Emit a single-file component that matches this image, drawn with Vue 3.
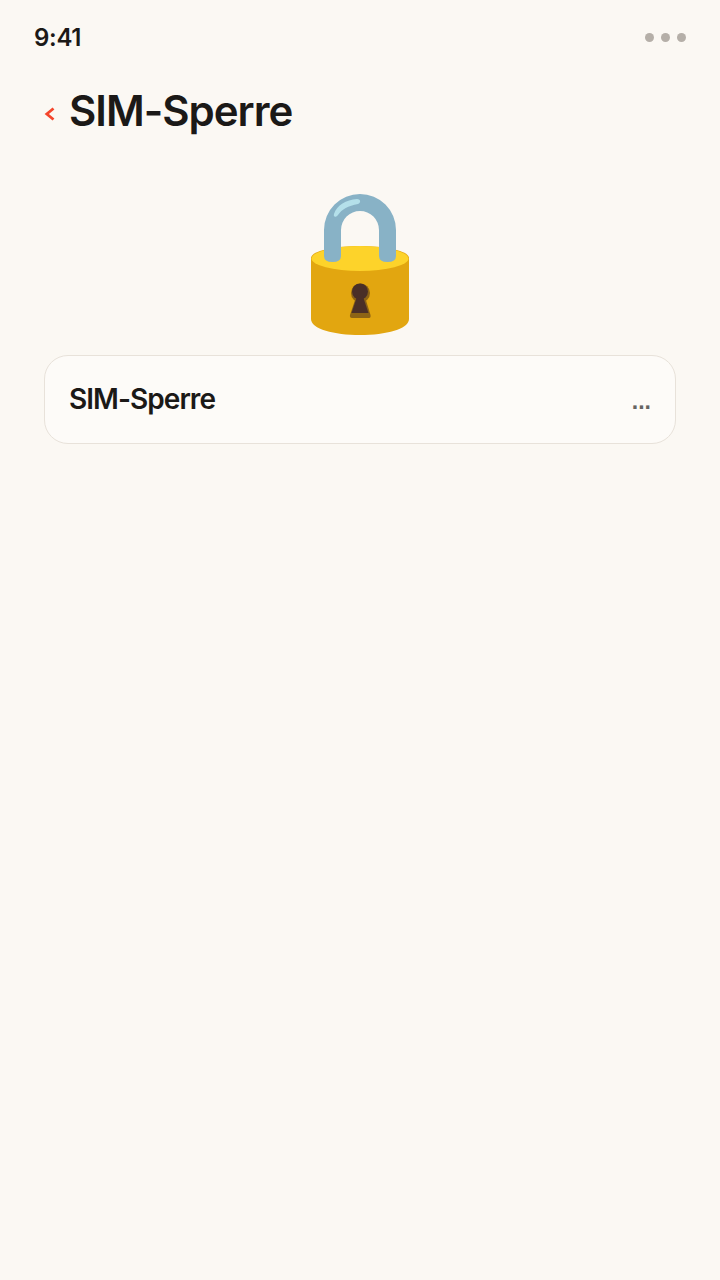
<script setup>
const title = 'SIM-Sperre'
</script>

<template>
  <main class="screen">
    <header class="status">
      <span class="time">9:41</span>
      <span class="dots"><i></i><i></i><i></i></span>
    </header>
    <div class="heading">
      <svg class="back" width="11" height="16" viewBox="0 0 11 16">
        <path d="M9.5 2.5 L2.8 8 L9.5 13.5" fill="none" stroke="#f4452b" stroke-width="2.8" />
      </svg>
      <h1>{{ title }}</h1>
    </div>
    <div class="hero">
      <svg width="100" height="143" viewBox="0 0 100 143">
        <path d="M1 65 C1 58 24 53 50 53 C76 53 99 58 99 65 V126 C99 136 76 142 50 142 C24 142 1 136 1 126 Z" fill="#e2a610" />
        <ellipse cx="50" cy="65.500" rx="48.500" ry="12.500" fill="#fdd32a" />
        <path d="M14 37 A36 36 0 0 1 86 37 V63 Q86 69 77.500 69 Q69 69 69 63 V37 A19 19 0 0 0 31 37 V63 Q31 69 22.500 69 Q14 69 14 63 Z" fill="#88b2c6" />
        <path d="M24 21 C27 12 36 7 47 6 C51 6 51 10 48 11 C38 13 32 16 28 22 C26 25 23 24 24 21 Z" fill="#b4e0ea" />
        <circle cx="50.500" cy="100" r="9.500" fill="#8d6415" />
        <path d="M46 104 L40 122 Q39.500 125 42 125 H59 Q61 125 60.500 122 L55 104 Z" fill="#8d6415" />
        <circle cx="50" cy="98.500" r="8" fill="#4a2f27" />
        <path d="M47.500 102 L41.500 120 H58.500 L52.500 102 Z" fill="#4a2f27" />
      </svg>
    </div>
    <section class="card">
      <span class="label">{{ title }}</span>
      <span class="more">...</span>
    </section>
  </main>
</template>

<style scoped>
.screen {
  width: 720px;
  height: 1280px;
  box-sizing: border-box;
  background: #fbf8f3;
  font-family: Inter, "Liberation Sans", sans-serif;
  color: #1b1917;
  overflow: hidden;
}
.status {
  height: 74px;
  box-sizing: border-box;
  padding: 0 34px;
  display: flex;
  align-items: center;
  justify-content: space-between;
}
.time {
  font-size: 24px;
  font-weight: 600;
  letter-spacing: -0.3px;
}
.dots {
  display: flex;
  gap: 7px;
}
.dots i {
  width: 9px;
  height: 9px;
  border-radius: 50%;
  background: #b5afa8;
}
.heading {
  height: 74px;
  padding-left: 44px;
  display: flex;
  align-items: center;
  gap: 14px;
}
.back {
  flex: none;
  margin-top: 6px;
}
h1 {
  margin: 0;
  font-size: 42px;
  line-height: 74px;
  font-weight: 600;
  letter-spacing: -1px;
}
.hero {
  height: 143px;
  margin-top: 45px;
  display: flex;
  justify-content: center;
}
.card {
  box-sizing: border-box;
  height: 89px;
  margin: 19px 44px 0;
  padding: 0 24px;
  border: 1px solid #e8e2da;
  border-radius: 24px;
  background: #fdfbf8;
  display: flex;
  align-items: center;
  justify-content: space-between;
}
.label {
  font-size: 28px;
  font-weight: 600;
  letter-spacing: -0.95px;
  margin-top: -1px;
}
.more {
  font-family: "Liberation Sans", sans-serif;
  font-size: 23px;
  font-weight: 700;
  color: #666462;
  margin-top: 4px;
}
</style>
